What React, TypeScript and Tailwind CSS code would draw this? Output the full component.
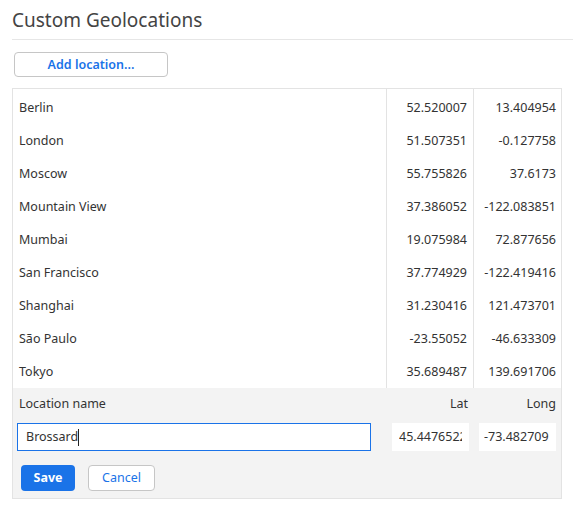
import React from "react";

const rows: [string, string, string][] = [
  ["Berlin", "52.520007", "13.404954"],
  ["London", "51.507351", "-0.127758"],
  ["Moscow", "55.755826", "37.6173"],
  ["Mountain View", "37.386052", "-122.083851"],
  ["Mumbai", "19.075984", "72.877656"],
  ["San Francisco", "37.774929", "-122.419416"],
  ["Shanghai", "31.230416", "121.473701"],
  ["São Paulo", "-23.55052", "-46.633309"],
  ["Tokyo", "35.689487", "139.691706"],
];

export default function App() {
  return (
    <div
      className="w-[575px] h-[516px] bg-white pl-3 text-[#333]"
      style={{ fontFamily: '"Noto Sans", "Open Sans", sans-serif' }}
    >
      <div className="h-[40px] border-b border-[#e6e6e6] mr-[2px] flex items-center">
        <h1 className="text-[19px] text-[#444] font-normal leading-none pt-[1px]">Custom Geolocations</h1>
      </div>
      <div className="pt-[12px] pl-[2px]">
        <button className="w-[154px] h-[25px] pt-[2px] rounded-[4px] border border-[#c6c6c6] bg-white text-[12.5px] font-semibold text-[#1a73e8] flex items-center justify-center">
          Add location...
        </button>
      </div>
      <div className="mt-[11px] mr-[13px] border border-[#e3e3e3]">
        <div className="grid grid-cols-[1fr_87px_88px] text-[12.5px]">
          {rows.map(([name, lat, lng], i) => (
            <React.Fragment key={name}>
              <div className={`${i === 0 ? "h-[35px] pt-[3px]" : "h-[33px] pt-[1px]"} flex items-center pl-[6px]`}>{name}</div>
              <div className={`${i === 0 ? "h-[35px] pt-[3px]" : "h-[33px] pt-[1px]"} flex items-center justify-end pr-[6px] border-l border-[#e3e3e3]`}>{lat}</div>
              <div className={`${i === 0 ? "h-[35px] pt-[3px]" : "h-[33px] pt-[1px]"} flex items-center justify-end pr-[5px] border-l border-[#e3e3e3]`}>{lng}</div>
            </React.Fragment>
          ))}
        </div>
        <div className="bg-[#f3f3f3] pl-[4px] pr-[5px] pt-[7px] pb-[7px] text-[12.5px]">
          <div className="flex h-[18px] items-center">
            <div className="flex-1 pl-[2px]">Location name</div>
            <div className="w-[77px] ml-[21px] text-right pr-[1px]">Lat</div>
            <div className="w-[77px] ml-[10px] text-right">Long</div>
          </div>
          <div className="flex mt-[10px] h-[28px]">
            <div className="flex-1 border border-[#1a73e8] bg-white flex items-center pl-[8px]">
              <span>Brossard</span>
              <span className="inline-block w-[1px] h-[17px] bg-[#222]" />
            </div>
            <input
              readOnly
              value="45.4476522"
              className="w-[77px] ml-[21px] bg-white px-[7px] text-[12.5px] text-[#333] outline-none border-0"
            />
            <input
              readOnly
              value="-73.482709"
              className="w-[77px] ml-[10px] bg-white pl-[5px] pr-0 text-[12.5px] text-[#333] outline-none border-0"
            />
          </div>
          <div className="flex mt-[14px] pl-[4px] gap-[13px]">
            <button className="w-[54px] h-[26px] rounded-[4px] bg-[#1a73e8] text-white font-bold text-[12.5px]">
              Save
            </button>
            <button className="w-[67px] h-[26px] rounded-[4px] border border-[#c6c6c6] bg-white text-[#1a73e8] text-[12.5px]">
              Cancel
            </button>
          </div>
        </div>
      </div>
    </div>
  );
}
